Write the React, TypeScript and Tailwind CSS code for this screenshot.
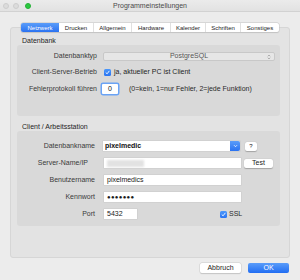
import React from "react";

const tabs = [
  { name: "Netzwerk", w: "w-[38px]", active: true },
  { name: "Drucken", w: "w-[34px]" },
  { name: "Allgemein", w: "w-[38px]" },
  { name: "Hardware", w: "w-[39px]" },
  { name: "Kalender", w: "w-[35px]" },
  { name: "Schriften", w: "w-[35px]" },
  { name: "Sonstiges", w: "w-[39px]" },
];

const Check = () => (
  <span className="flex items-center justify-center w-[7px] h-[7px] rounded-[1.5px] bg-gradient-to-b from-[#4b97fa] to-[#2a74f2]">
    <svg width="5" height="5" viewBox="0 0 10 10">
      <path d="M2 5.5 L4.2 7.6 L8.2 2.4" fill="none" stroke="white" strokeWidth="1.8" strokeLinecap="round" strokeLinejoin="round" />
    </svg>
  </span>
);

const Field = ({ w, children }: { w: string; children?: React.ReactNode }) => (
  <div className={`${w} h-[10px] bg-white shadow-[0_0_0_0.5px_#c9c9c9] flex items-center px-[3px] text-[7px] text-[#1a1a1a]`}>
    {children}
  </div>
);

const Label = ({ children, extra = "" }: { children: React.ReactNode; extra?: string }) => (
  <div className={`w-[78px] shrink-0 text-right text-[7px] text-[#3a3a3a] ${extra}`}>{children}</div>
);

const App = () => {
  return (
    <div
      className="w-[300px] h-[280px] bg-[#ececec] flex flex-col overflow-hidden"
      style={{ fontFamily: '"Liberation Sans", Arial, sans-serif' }}
    >
      {/* title bar */}
      <div className="relative h-[12px] shrink-0 bg-gradient-to-b from-[#ebebeb] to-[#e2e2e2] border-b border-[#d2d2d2] flex items-center justify-center">
        <div className="absolute left-[3px] top-[2.5px] flex gap-[4px]">
          <span className="w-[6px] h-[6px] rounded-full bg-[#dcdcdc] border border-[#cdcdcd]" />
          <span className="w-[6px] h-[6px] rounded-full bg-[#dcdcdc] border border-[#cdcdcd] mr-[2px]" />
          <span className="w-[6px] h-[6px] rounded-full bg-[#2bc840] border border-[#24b135]" />
        </div>
        <span className="text-[7px] text-[#4a4a4a] leading-none">Programmeinstellungen</span>
      </div>

      {/* tabs */}
      <div className="mt-[11px] relative z-10 flex justify-center">
        <div className="flex h-[9px] rounded-[2px] bg-white shadow-[0_0_0_0.5px_#c6c6c6,0_0.5px_1px_rgba(0,0,0,0.15)]">
          {tabs.map((t, i) => (
            <div
              key={t.name}
              className={`${t.w} flex items-center justify-center text-[6px] leading-none ${
                t.active
                  ? "bg-gradient-to-b from-[#5a9cf9] to-[#2a72f1] text-white rounded-l-[2px]"
                  : "text-[#1c1c1c]"
              } ${i > 1 ? "border-l border-[#e0e0e0]" : ""}`}
            >
              {t.name}
            </div>
          ))}
        </div>
      </div>

      {/* tab panel */}
      <div className="-mt-[5px] mx-[10px] h-[231px] bg-[#e3e3e3] border border-[#d6d6d6] rounded-[3px] pt-[9px] pl-[6px] pr-[9px]">
        <div className="h-[8px] pl-[5px] text-[7px] leading-[8px] text-[#1e1e1e]">Datenbank</div>
        <div className="h-[71px] bg-[#d9d9d9] rounded-[3px] pt-[7px] flex flex-col">
          <div className="flex items-center h-[9px]">
            <Label extra="w-[80px]">Datenbanktyp</Label>
            <div className="ml-[6px] w-[172px] h-[9px] bg-[#e6e6e6] border border-[#c8c8c8] rounded-[2px] relative flex items-center justify-center text-[7px] text-[#555]">
              PostgreSQL
              <svg className="absolute right-[3px]" width="4" height="6" viewBox="0 0 4 6">
                <path d="M0.8 2.3 L2 1 L3.2 2.3 M0.8 3.7 L2 5 L3.2 3.7" fill="none" stroke="#8a8a8a" strokeWidth="0.6" />
              </svg>
            </div>
          </div>
          <div className="flex items-center h-[7px] mt-[8px]">
            <Label extra="w-[80px]">Client-Server-Betrieb</Label>
            <div className="ml-[7px] flex items-center gap-[3px] text-[7px] text-[#1e1e1e]">
              <Check />
              ja, aktueller PC ist Client
            </div>
          </div>
          <div className="flex items-center h-[10px] mt-[8px]">
            <Label extra="w-[80px]">Fehlerprotokoll führen</Label>
            <div className="ml-[5px] w-[16px] h-[10px] bg-white rounded-[1px] shadow-[0_0_0_1.5px_#6aa3f5] flex items-center justify-center text-[7px] text-[#111]">
              0
            </div>
            <span className="ml-[11px] text-[7px] text-[#2a2a2a]">(0=kein, 1=nur Fehler, 2=jede Funktion)</span>
          </div>
        </div>

        <div className="mt-[7px] h-[8px] pl-[5px] text-[7px] leading-[8px] text-[#1e1e1e]">Client / Arbeitsstation</div>
        <div className="h-[95px] bg-[#d9d9d9] rounded-[3px] pt-[10px] flex flex-col gap-[7px]">
          <div className="flex items-center h-[10px]">
            <Label>Datenbankname</Label>
            <div className="ml-[8px] flex h-[10px] shadow-[0_0_0_0.5px_#c9c9c9]">
              <div className="w-[127px] bg-white flex items-center px-[2px] text-[7px] font-bold text-[#111]">pixelmedic</div>
              <div className="w-[10px] bg-gradient-to-b from-[#5a9cf9] to-[#2a72f1] rounded-r-[2px] flex items-center justify-center">
                <svg width="5" height="4" viewBox="0 0 5 4">
                  <path d="M1 1.2 L2.5 2.7 L4 1.2" fill="none" stroke="white" strokeWidth="0.8" />
                </svg>
              </div>
            </div>
            <div className="ml-[5px] w-[12px] h-[9px] bg-white rounded-[2px] shadow-[0_0.5px_1px_rgba(0,0,0,0.25)] flex items-center justify-center text-[6px] text-[#222]">
              ?
            </div>
          </div>
          <div className="flex items-center h-[10px]">
            <Label extra="pr-[7px]">Server-Name/IP</Label>
            <div className="ml-[9px]">
              <Field w="w-[137px]">
                <div className="w-[37px] h-[7px] bg-[#e2e2e2] blur-[1px]" />
              </Field>
            </div>
            <div className="ml-[3px] w-[29px] h-[9px] bg-white rounded-[2px] shadow-[0_0.5px_1px_rgba(0,0,0,0.25)] flex items-center justify-center text-[7px] text-[#222]">
              Test
            </div>
          </div>
          <div className="flex items-center h-[10px]">
            <Label>Benutzername</Label>
            <div className="ml-[9px]">
              <Field w="w-[137px]">pixelmedics</Field>
            </div>
          </div>
          <div className="flex items-center h-[10px]">
            <Label>Kennwort</Label>
            <div className="ml-[9px]">
              <Field w="w-[137px]">
                <span className="text-[6px] tracking-[0.3px]">●●●●●●●</span>
              </Field>
            </div>
          </div>
          <div className="flex items-center h-[10px]">
            <Label>Port</Label>
            <div className="ml-[9px]">
              <Field w="w-[33px]">5432</Field>
            </div>
            <div className="ml-[83px] flex items-center gap-[2px] text-[7px] text-[#2a2a2a]">
              <Check />
              SSL
            </div>
          </div>
        </div>
      </div>

      {/* buttons */}
      <div className="mt-[5px] flex justify-end gap-[7px] pr-[11px]">
        <div className="w-[41px] h-[10px] bg-white rounded-[2px] shadow-[0_0_0_0.5px_#cfcfcf,0_0.5px_1px_rgba(0,0,0,0.2)] flex items-center justify-center text-[7px] text-[#1e1e1e]">
          Abbruch
        </div>
        <div className="w-[41px] h-[10px] rounded-[2px] bg-gradient-to-b from-[#5a9cf9] to-[#1f6cf2] flex items-center justify-center text-[7px] text-white">
          OK
        </div>
      </div>
    </div>
  );
};

export default App;
